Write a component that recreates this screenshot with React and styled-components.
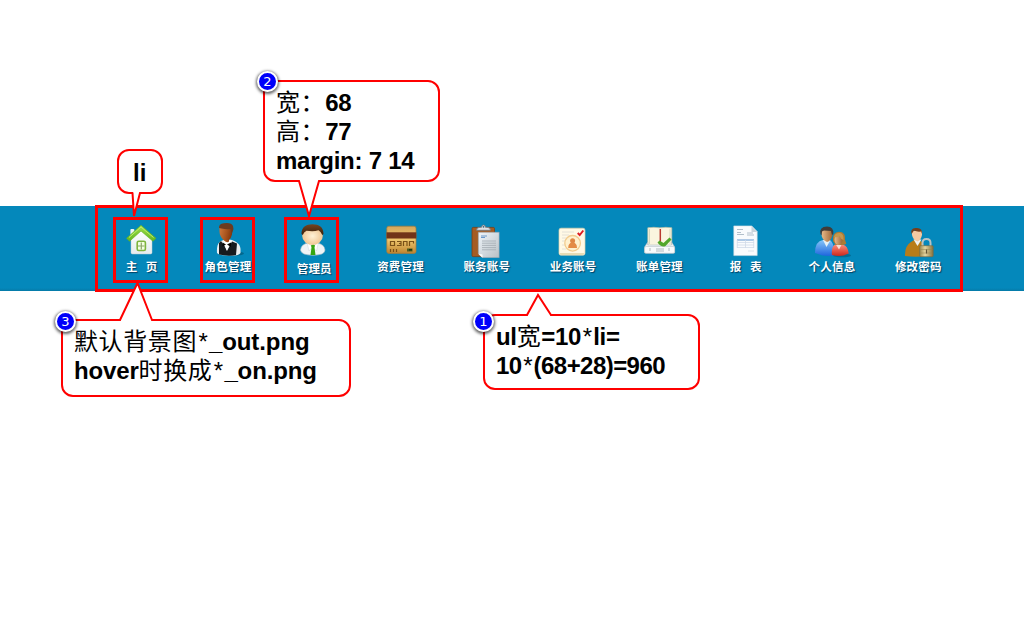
import React from "react";
import styled, { createGlobalStyle } from "styled-components";

const RED = "#ff0000";

const GlobalStyle = createGlobalStyle`
  body { margin: 0; background: #fff; }
`;

const Page = styled.div`
  position: relative;
  width: 1024px;
  height: 622px;
  overflow: hidden;
  padding-top: 206px;
  box-sizing: border-box;
  font-family: "Liberation Sans", "Noto Sans CJK SC", sans-serif;
`;

const Bar = styled.nav`
  display: flex;
  height: 85px;
  background: linear-gradient(#0488bb 0 82px, #057fae 84px, #0579a7 85px);
`;

const Menu = styled.ul`
  display: flex;
  flex: none;
  box-sizing: border-box;
  width: 868px;
  height: 87px;
  margin: -1px 0 0 95px;
  padding: 0 0 0 0.5px;
  border: 3px solid ${RED};
  list-style: none;
`;

const Item = styled.li`
  position: relative;
  display: flex;
  flex: 0 0 86.3px;
  flex-direction: column;
  align-items: center;
  box-sizing: border-box;
  padding-top: 14px;
`;

const Icon = styled.svg`
  display: block;
  width: 40px;
  height: 36px;
  flex: none;
`;

const Label = styled.span`
  margin-top: ${(p) => -1 + (p.$drop || 0)}px;
  font: bold 11.5px/18px "Noto Sans CJK SC", sans-serif;
  letter-spacing: 0.2px;
  color: #fff;
  white-space: pre;
  text-shadow: 1px 1px 1px rgba(0, 40, 70, 0.75);
`;

const Frame = styled.span`
  position: absolute;
  top: 9px;
  left: ${(p) => p.$left}px;
  box-sizing: border-box;
  width: 55px;
  height: 66px;
  border: 3px solid ${RED};
`;

const Bubble = styled.div`
  position: absolute;
  left: ${(p) => p.$x}px;
  top: ${(p) => p.$y}px;
  width: ${(p) => p.$w}px;
  height: ${(p) => p.$h}px;
  box-sizing: border-box;
  padding: ${(p) => p.$pad};
  border: 2px solid ${RED};
  border-radius: 12px;
  background: #fff;
`;

const Tail = styled.svg`
  position: absolute;
  left: 0;
  top: 0;
  overflow: visible;
`;

const Badge = styled.span`
  position: absolute;
  left: ${(p) => p.$left}px;
  top: ${(p) => p.$top}px;
  display: flex;
  align-items: center;
  justify-content: center;
  box-sizing: border-box;
  width: 21px;
  height: 21px;
  border: 2px solid #fff;
  border-radius: 50%;
  background: #0000fa;
  box-shadow: 0 1px 3px 1px rgba(0, 0, 0, 0.6);
  color: #fff;
  font: 13px/16px "DejaVu Sans", sans-serif;
`;

const Line = styled.div`
  height: 29px;
  color: #000;
  font-size: 24px;
  font-weight: bold;
  line-height: 29px;
  letter-spacing: ${(p) => p.$track || 0}px;
  white-space: pre;
`;

const Han = styled.span`
  font-family: "Noto Sans CJK SC", sans-serif;
  font-weight: 400;
  line-height: 0;
  letter-spacing: 0.6px;
`;

const Star = styled.span`
  display: inline-block;
  width: 12px;
  font: 400 24px/0 "Liberation Sans", sans-serif;
  text-align: center;
`;

function HomeIcon() {
  return (
    <Icon viewBox="0 0 40 36">
      <defs>
        <linearGradient id="roof" x2="0" y2="1"><stop stopColor="#a5e04c" /><stop offset="1" stopColor="#5fb61e" /></linearGradient>
        <linearGradient id="wall" x2="0" y2="1"><stop stopColor="#fff" /><stop offset="1" stopColor="#e6ecee" /></linearGradient>
      </defs>
      <rect x="8.4" y="7" width="4" height="7" rx="1" fill="#eff4f6" />
      <path d="M9 16 19 7l11 9v14.500q0 1.500-1.500 1.500h-18Q9 32 9 30.500Z" fill="url(#wall)" stroke="#bccdd3" strokeWidth=".5" />
      <path d="M19 3.200 34 16.300l-3 3L19 9 7.500 19.300l-3-3Z" fill="url(#roof)" stroke="#5fae20" strokeWidth=".6" strokeLinejoin="round" />
      <path d="m7 15.500 12-10.500 12.500 10.500" fill="none" stroke="#bdeb70" strokeWidth="1" />
      <rect x="15.200" y="19.300" width="8.200" height="9.200" rx="1.500" fill="#f4ffe0" stroke="#7fb53e" strokeWidth="1.600" />
      <path d="M19.300 20.500v7M16 24h6.500" stroke="#8ca66a" strokeWidth="1.200" />
    </Icon>
  );
}

function WaiterIcon() {
  return (
    <Icon viewBox="0 0 40 36">
      <defs>
        <linearGradient id="skin" x2="1" y2=".3"><stop stopColor="#d27a3d" /><stop offset=".6" stopColor="#a9551f" /><stop offset="1" stopColor="#84380d" /></linearGradient>
      </defs>
      <ellipse cx="27" cy="31.500" rx="9" ry="2.200" fill="#02536f" opacity=".6" />
      <path d="M9 31c-.5-7 1-10 4-12l5-2 6 1c5 2 8 4 8.500 9v4q-1 2.500-9 2.500Q10 33.500 9 31Z" fill="#e9eef1" />
      <path d="M13 19 16.500 24 19 29l5-9.500 5 2-1 11.500q-8 1.500-17-.5L11 21Z" fill="#171b20" />
      <path d="m15 18.500 3.800 10 5-10Z" fill="#fff" />
      <path d="m14.500 20.500 3.500 2-3.500 2ZM23 20.500l-4 2 4 2.500Z" fill="#050505" />
      <path d="M11.500 4q6-3.500 13 .5l-.5 8q-1 4-3 5.500v1.500q-2 2-5-1-4.500-4-4.500-9Z" fill="url(#skin)" />
      <path d="M11 6q-.500-4 5-4.800 7.500-1 9 2.800 1 2-.5 6l-1 2-1-5q-4 .5-9-.5Z" fill="#6c3b20" />
    </Icon>
  );
}

function AdminIcon() {
  return (
    <Icon viewBox="0 0 40 36">
      <defs>
        <radialGradient id="face"><stop stopColor="#fff2d7" /><stop offset="1" stopColor="#f0c794" /></radialGradient>
        <linearGradient id="brown" x2="0" y2="1"><stop stopColor="#754521" /><stop offset="1" stopColor="#39200c" /></linearGradient>
      </defs>
      <path d="M6.500 28q.5-6 8-7h8q8 1 8.500 7 0 5.200-12 5.200T6.500 28Z" fill="#eff4f6" stroke="#a8bdc6" strokeWidth=".6" />
      <path d="m13 20 5.500 5 6-5-2 9-4-4-3.500 4Z" fill="#fff" stroke="#c4d0d5" strokeWidth=".4" />
      <path d="m17 23.500 2-1.500 2 1.500-.5 2 1 7.500h-5l1-7.500Z" fill="#35a511" />
      <ellipse cx="18.500" cy="14" rx="10.300" ry="9" fill="url(#face)" />
      <path d="M7.500 12C7.500 5 12 2.200 18.500 2.200s11 2.800 11 9.800l-1.200 1q-1-3-3.800-4.700-5 1.500-12 .4-2.800 1.300-3.700 4.300Z" fill="url(#brown)" />
    </Icon>
  );
}

function CardIcon() {
  return (
    <Icon viewBox="0 0 40 36">
      <defs>
        <linearGradient id="gold" x2="0" y2="1"><stop stopColor="#d5a65b" /><stop offset=".5" stopColor="#efc76d" /><stop offset="1" stopColor="#bd8430" /></linearGradient>
      </defs>
      <rect x="5.800" y="4.200" width="29.200" height="27.200" rx="2" fill="url(#gold)" stroke="#a77b38" strokeWidth=".7" />
      <rect x="5.500" y="10.300" width="29.800" height="6.200" fill="#713419" />
      <g fill="none" stroke="#795017" strokeWidth="1.200">
        <path d="M9.500 19.500h4v4h-4ZM16 19.500h4v4h-4M18 21.500h2M22.500 24v-4.500h3.500V24M28.500 24v-4.500h4v2" />
        <path d="M9.500 27v3M12.500 27v3M15.500 27v3" />
      </g>
      <rect x="26" y="26.500" width="5.500" height="3" fill="#4f5e20" />
      <rect x="28" y="27" width="3" height="1.500" fill="#23370f" />
    </Icon>
  );
}

function ClipboardIcon() {
  return (
    <Icon viewBox="0 0 40 36">
      <defs>
        <linearGradient id="sheet" x2="1" y2="1"><stop stopColor="#eff5fa" /><stop offset="1" stopColor="#b9c0c5" /></linearGradient>
      </defs>
      <rect x="5" y="5.400" width="22.500" height="29.200" rx="1.200" fill="#a55c22" stroke="#794014" strokeWidth=".8" />
      <path d="M9.500 8.300q0-3 3.500-3h1.500q0-2.300 2-2.300t2 2.300H20q3.500 0 3.500 3Z" fill="#dce1e5" stroke="#6d747b" strokeWidth=".8" />
      <circle cx="16.500" cy="4.800" r=".9" fill="#40637a" />
      <path d="M11.300 10.200h20.900v25.600H15.500l-4.200-4Z" fill="url(#sheet)" stroke="#8997a0" strokeWidth=".5" />
      <path d="m11.300 31.800 4.200 4v-3.300Z" fill="#fff" />
      <path d="M14 14h6M14 15.500h4" stroke="#6d9acb" strokeWidth="1" />
      <path d="M15 19h14M15 21.200h14M15 23.400h14M15 25.600h14M15 27.800h14" stroke="#a7afb5" strokeWidth=".9" />
    </Icon>
  );
}

function BusinessIcon() {
  return (
    <Icon viewBox="0 0 40 36">
      <rect x="6" y="6.200" width="26" height="27" rx="2" fill="#fff9e5" stroke="#ddd3ae" strokeWidth=".7" />
      <path d="M6.500 31q0 2 2 2h21q2 0 2-2Z" fill="#e8dcb5" />
      <path d="M9 10h12M9 13h7M9 16h4M9 19h3M9 23h3M9 27h4" stroke="#dddcd3" strokeWidth=".8" />
      <circle cx="19.600" cy="21.300" r="7.800" fill="#fff1ce" stroke="#f2cb8d" strokeWidth="1.300" />
      <circle cx="19.600" cy="18.800" r="2.500" fill="#df8744" />
      <path d="M15.200 26q0-5.500 4.400-5.500T24 26Z" fill="#e48b45" />
      <path d="m24.700 11 2 2 3.600-4.500" fill="none" stroke="#df1b22" strokeWidth="1.900" />
    </Icon>
  );
}

function BillIcon() {
  return (
    <Icon viewBox="0 0 40 36">
      <path d="M8.800 5.800q6-1 12 0 6-1 12 0v18.700h-24Z" fill="#faf5df" stroke="#b7bea5" strokeWidth=".7" />
      <path d="M10.500 7v15M31 7v15" stroke="#d8d8be" strokeWidth="1" />
      <path d="M21.300 7v13" stroke="#b9382f" strokeWidth="1.500" />
      <path d="m8.800 20-3.100 4.800V31h29.900v-6.200L32.500 20v3H8.800Z" fill="#edf2f4" stroke="#b2bcc1" strokeWidth=".6" />
      <rect x="5.600" y="24.500" width="30" height="6.800" rx="1.500" fill="#f7fafb" stroke="#bac5ca" strokeWidth=".6" />
      <path d="M11 26v3M17 27h8M17 29h8M30 26v3" stroke="#9eaab0" strokeWidth=".8" />
      <path d="m18.500 20.500 2-2 4 2.500 6-5.500 2 2-6 6.500q-4 2-8-3.500Z" fill="#51a72a" />
    </Icon>
  );
}

function ReportIcon() {
  return (
    <Icon viewBox="0 0 40 36">
      <path d="M7.800 3.900h18l5.400 5.600v24.100H7.800Z" fill="#f9fbfd" stroke="#cbd8df" strokeWidth=".6" />
      <path d="M25.500 4v6h5.700Z" fill="#cad4db" />
      <path d="M11 7.500h6M11 10.500h4M11 12.500h7M21 11h6M21 13h7" stroke="#a9b8c5" strokeWidth=".9" />
      <path d="M11 18h17" stroke="#96b9de" strokeWidth="1.500" />
      <path d="M11 20.500h17M11 23h17M11 25.500h17M11.300 18v8M19.500 18v8M27.700 18v8" fill="none" stroke="#d0dae8" strokeWidth=".8" />
      <path d="M22 29h6" stroke="#d5dfe6" strokeWidth=".9" />
    </Icon>
  );
}

function PeopleIcon() {
  return (
    <Icon viewBox="0 0 40 36">
      <defs>
        <linearGradient id="blue" x2="0" y2="1"><stop stopColor="#86c5f8" /><stop offset="1" stopColor="#1f66dd" /></linearGradient>
        <linearGradient id="red" x2="0" y2="1"><stop stopColor="#ff8c79" /><stop offset="1" stopColor="#cc291d" /></linearGradient>
        <linearGradient id="tan" x2="1"><stop stopColor="#e7ba8a" /><stop offset="1" stopColor="#9d6536" /></linearGradient>
      </defs>
      <ellipse cx="30" cy="33.500" rx="9" ry="1.700" fill="#03506d" opacity=".5" />
      <path d="M3 31q0-12 8-13h6q5 1 6 15-10 2.500-20-2Z" fill="url(#blue)" />
      <path d="m11 18 3.500 7 4-7Z" fill="#e6f1f6" />
      <path d="M9.500 8h11v5q-1.500 6-5.500 7-5-2-5.500-7Z" fill="url(#tan)" />
      <path d="M8.500 12q-1.500-7.500 6.500-7.500 7 0 6.300 7.500L20 13l-1-4-7-.5-2 1-.5 4Z" fill="#413c38" />
      <path d="M20 33q-1-8 3-10.500h8q5 1.500 5.700 9-7 4-16.700 1.500Z" fill="url(#red)" />
      <path d="m23.500 22 3.500 5.500 3-5.500Z" fill="#f6ded2" />
      <path d="M21 19q-1-9 6-9.300 7 .3 6 8l1.300 4q-2 1.500-4.800 1.300h-6Z" fill="#ad7b35" />
      <ellipse cx="26.500" cy="17.500" rx="4" ry="5.500" fill="url(#tan)" />
      <path d="M22 15q1-4.500 6-4 4 1 3.500 7-3-1-4-4-2 2-5.500 1" fill="#c4974d" />
    </Icon>
  );
}

function PasswordIcon() {
  return (
    <Icon viewBox="0 0 40 36">
      <defs>
        <linearGradient id="brass" x2="1"><stop stopColor="#9b8950" /><stop offset=".4" stopColor="#e5d5a0" /><stop offset="1" stopColor="#84713d" /></linearGradient>
      </defs>
      <path d="M7 34q-.5-10 6-14l3-2h5q6 2 7 16-10 1.500-21 0Z" fill="#b87c18" />
      <path d="m15.500 17.500 4 6.500 4-6.500Z" fill="#edf1ef" />
      <path d="M14 9h10v4q-1 5-4.500 6.500Q15 18 14 13Z" fill="#f4c9a2" />
      <path d="M13.500 12q-1.500-5.500 4-6 7-1 6.500 6l-1-2.500q-4 .5-7-1Z" fill="#763e1c" />
      <path d="M24.500 25v-4q0-4 4-4t4 4v4" fill="none" stroke="#b9c3c4" strokeWidth="2" />
      <rect x="21.700" y="23.700" width="13.500" height="11" rx="1" fill="url(#brass)" stroke="#776943" strokeWidth=".6" />
      <path d="M22.500 27.500h12M22.500 31h12" stroke="#94824d" strokeWidth=".5" />
      <path d="M28.500 27.500v4" stroke="#615334" strokeWidth="1.200" />
    </Icon>
  );
}

const items = [
  { label: "主   页", icon: HomeIcon, frame: 14.5 },
  { label: "角色管理", icon: WaiterIcon, frame: 15.2 },
  { label: "管理员", icon: AdminIcon, frame: 12.9, drop: 1.5 },
  { label: "资费管理", icon: CardIcon },
  { label: "账务账号", icon: ClipboardIcon },
  { label: "业务账号", icon: BusinessIcon },
  { label: "账单管理", icon: BillIcon },
  { label: "报   表", icon: ReportIcon },
  { label: "个人信息", icon: PeopleIcon },
  { label: "修改密码", icon: PasswordIcon },
];

/* tail = [baseLeft, baseRight, baseY, tipX, tipY], relative to the bubble's padding box. */
function Callout({ x, y, w, h, pad, tail, badge, badgeAt = [-8, -11], children }) {
  const [x1, x2, base, tipX, tipY] = tail;
  const inner = tipY > base ? base - 1.5 : base + 1.5;
  return (
    <Bubble $x={x} $y={y} $w={w} $h={h} $pad={pad}>
      <Tail width="1" height="1">
        <polygon
          points={`${x1 + 0.5},${inner} ${x1 + 0.5},${base} ${tipX},${tipY} ${x2 - 0.5},${base} ${x2 - 0.5},${inner}`}
          fill="#fff"
        />
        <polyline
          points={`${x1},${base} ${tipX},${tipY} ${x2},${base}`}
          fill="none"
          stroke={RED}
          strokeWidth="2"
          strokeLinecap="round"
        />
      </Tail>
      {badge && <Badge $left={badgeAt[0]} $top={badgeAt[1]}>{badge}</Badge>}
      {children}
    </Bubble>
  );
}

export default function App() {
  return (
    <Page>
      <GlobalStyle />
      <Bar>
        <Menu>
          {items.map(({ label, icon: Glyph, frame, drop }) => (
            <Item key={label}>
              <Glyph />
              <Label $drop={drop}>{label}</Label>
              {frame && <Frame $left={frame} />}
            </Item>
          ))}
        </Menu>
      </Bar>
      <Callout x={117} y={149} w={46} h={45} pad="7px 0 0 14px" tail={[13.5, 21, 42, 15, 65]}>
        <Line>li</Line>
      </Callout>
      <Callout x={263} y={80} w={177} h={102} pad="6px 0 0 11px" tail={[34, 54, 99, 44, 134]} badge="2">
        <Line $track={-0.3}><Han>宽：</Han>68</Line>
        <Line $track={-0.3}><Han>高：</Han>77</Line>
        <Line $track={-0.25}>margin: 7 14</Line>
      </Callout>
      <Callout x={61} y={319} w={290} h={78} pad="6px 0 0 11px" tail={[57, 89, -1, 74.5, -38]} badge="3" badgeAt={[-8, -10]}>
        <Line $track={-0.1}><Han>默认背景图</Han><Star>*</Star>_out.png</Line>
        <Line $track={-0.15}>hover<Han>时换成</Han><Star>*</Star>_on.png</Line>
      </Callout>
      <Callout x={483} y={314} w={217} h={76} pad="6px 0 0 11px" tail={[42, 66, -1, 53, -21]} badge="1" badgeAt={[-12, -5]}>
        <Line $track={-0.3}>ul<Han>宽</Han>=10<Star>*</Star>li=</Line>
        <Line $track={-0.55}>10<Star>*</Star>(68+28)=960</Line>
      </Callout>
    </Page>
  );
}
